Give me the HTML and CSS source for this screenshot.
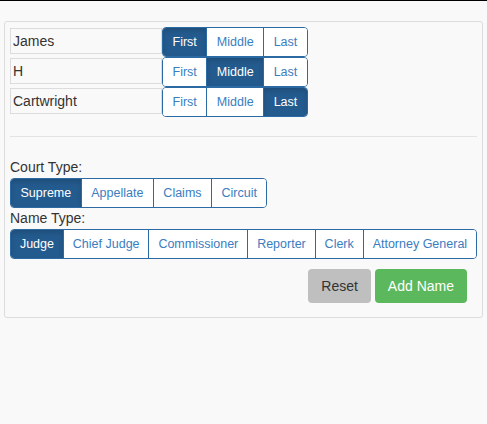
FILE: index.html
```html
<!DOCTYPE html>
<html>
<head>
<meta charset="utf-8">
<link rel="stylesheet" href="styles.css">
</head>
<body>
<div class="topline"></div>
<div class="panel">
  <div class="name-rows">
    <div class="name-row">
      <input class="name-input" type="text" value="James">
      <div class="btn-group">
        <button class="btn active">First</button><button class="btn">Middle</button><button class="btn">Last</button>
      </div>
    </div>
    <div class="name-row">
      <input class="name-input" type="text" value="H">
      <div class="btn-group">
        <button class="btn">First</button><button class="btn active">Middle</button><button class="btn">Last</button>
      </div>
    </div>
    <div class="name-row">
      <input class="name-input" type="text" value="Cartwright">
      <div class="btn-group">
        <button class="btn">First</button><button class="btn">Middle</button><button class="btn active">Last</button>
      </div>
    </div>
  </div>
  <hr class="divider">
  <div class="label">Court Type:</div>
  <div class="btn-group">
    <button class="btn active">Supreme</button><button class="btn">Appellate</button><button class="btn">Claims</button><button class="btn">Circuit</button>
  </div>
  <div class="label label-tight">Name Type:</div>
  <div class="btn-group btn-group-full">
    <button class="btn active">Judge</button><button class="btn">Chief Judge</button><button class="btn">Commissioner</button><button class="btn">Reporter</button><button class="btn">Clerk</button><button class="btn">Attorney General</button>
  </div>
  <div class="actions">
    <button class="action reset">Reset</button>
    <button class="action add">Add Name</button>
  </div>
</div>
</body>
</html>
```
FILE: styles.css
```css
html, body {
  margin: 0;
  padding: 0;
  background: #f9f9f9;
  font-family: "Liberation Sans", Arial, sans-serif;
  color: #333;
}
.topline {
  height: 1px;
  background: #000;
}
.panel {
  margin: 20px 4px 0 4px;
  border: 1px solid #dcdcdc;
  border-radius: 3px;
  padding: 5px 5px 14px 5px;
  box-sizing: content-box;
  width: 467px;
}
.name-rows {
  display: flex;
  flex-direction: column;
}
.name-row {
  display: flex;
  height: 30px;
}
.name-input {
  width: 152px;
  height: 26px;
  margin: 1px 0 0 0;
  box-sizing: border-box;
  border: 1px solid #dcdcdc;
  background: #f9f9f9;
  font-family: "Liberation Sans", Arial, sans-serif;
  font-size: 14px;
  color: #333;
  padding: 0 2px;
  outline: none;
}
.btn-group {
  display: inline-flex;
  height: 30px;
  border: 1px solid #2c6aa3;
  border-radius: 4px;
  overflow: hidden;
  box-sizing: border-box;
  background: #fff;
}
.btn {
  font-family: "Liberation Sans", Arial, sans-serif;
  font-size: 12.5px;
  color: #3a7dc0;
  background: #fff;
  border: none;
  border-left: 1px solid #2c6aa3;
  padding: 0 9.5px;
  margin: 0;
  height: 100%;
  cursor: pointer;
}
.btn:first-child {
  border-left: none;
}
.btn.active {
  background: #245b8f;
  color: #fff;
  box-shadow: inset 0 3px 5px rgba(0,0,0,0.15);
}
.btn-group-full {
  display: flex;
  width: 467px;
}
.btn-group-full .btn {
  flex: 1 1 auto;
  padding: 0 8px;
}
.divider {
  border: none;
  border-top: 1px solid #e3e3e3;
  margin: 19px 0 0 0;
  height: 0;
}
.label {
  font-size: 14px;
  line-height: 17px;
  margin-top: 22px;
  margin-bottom: 2px;
  color: #333;
}
.label-tight {
  margin-top: 2px;
  margin-bottom: 2px;
}
.actions {
  display: flex;
  justify-content: flex-end;
  gap: 4px;
  margin: 10px 10px 0 0;
}
.action {
  font-family: "Liberation Sans", Arial, sans-serif;
  font-size: 14px;
  height: 34px;
  padding: 0 13px;
  border: none;
  border-radius: 4px;
}
.reset {
  background: #bfbfbf;
  color: #333;
}
.add {
  background: #5cb85c;
  color: #fff;
}
```
